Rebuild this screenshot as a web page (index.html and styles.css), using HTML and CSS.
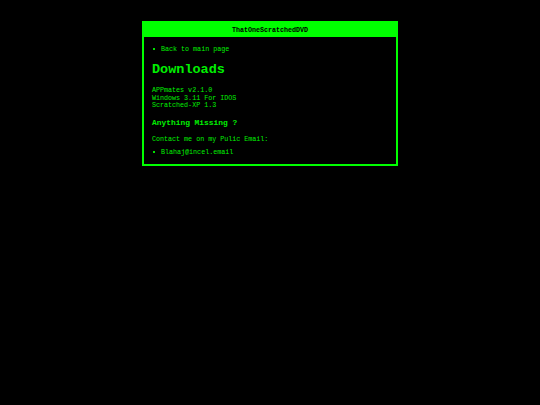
FILE: index.html
```html
<!DOCTYPE html>
<html>
<head>
<meta charset="utf-8">
<title>ThatOneScratchedDVD</title>
<link rel="stylesheet" href="styles.css">
</head>
<body>
<div class="window">
  <div class="titlebar">ThatOneScratchedDVD</div>
  <div class="content">
    <ul class="list first">
      <li><span class="dot"></span><a href="#">Back to main page</a></li>
    </ul>
    <h1 class="heading">Downloads</h1>
    <div class="downloads">
      <div>APPmates v2.1.0</div>
      <div>Windows 3.11 For IDOS</div>
      <div>Scratched-XP 1.3</div>
    </div>
    <h2 class="sub">Anything Missing ?</h2>
    <p class="contact">Contact me on my Pulic Email:</p>
    <ul class="list last">
      <li><span class="dot"></span><a href="#">Blahaj@incel.email</a></li>
    </ul>
  </div>
</div>
</body>
</html>
```
FILE: styles.css
```css
html, body {
  margin: 0;
  padding: 0;
  background: #000;
}
body {
  font-family: "Liberation Mono", "DejaVu Sans Mono", monospace;
  color: #00f000;
  font-size: 6.7px;
}
.window {
  width: 252px;
  margin: 21px auto 0;
  border: 2px solid #00ff00;
}
.titlebar {
  background: #00ff00;
  color: #000;
  font-weight: bold;
  text-align: center;
  height: 14px;
  line-height: 15px;
}
.content {
  padding: 8px 8px 8px 8px;
  display: flex;
  flex-direction: column;
}
.list {
  list-style: none;
  margin: 0;
  padding: 0;
}
.list li {
  display: flex;
  align-items: center;
  gap: 6px;
  line-height: 8px;
  height: 8px;
}
.dot {
  width: 2px;
  height: 2px;
  margin-left: 1px;
  background: #00e000;
}
.list a {
  color: #00f000;
  text-decoration: none;
}
.heading {
  margin: 9px 0 0;
  font-size: 13.5px;
  line-height: 16px;
  font-weight: bold;
}
.downloads {
  margin-top: 9px;
  line-height: 7.5px;
}
.sub {
  margin: 8px 0 0;
  font-size: 7.9px;
  line-height: 10px;
  font-weight: bold;
}
.contact {
  margin: 7px 0 0;
  line-height: 8px;
}
.last {
  margin-top: 5px;
}
```
